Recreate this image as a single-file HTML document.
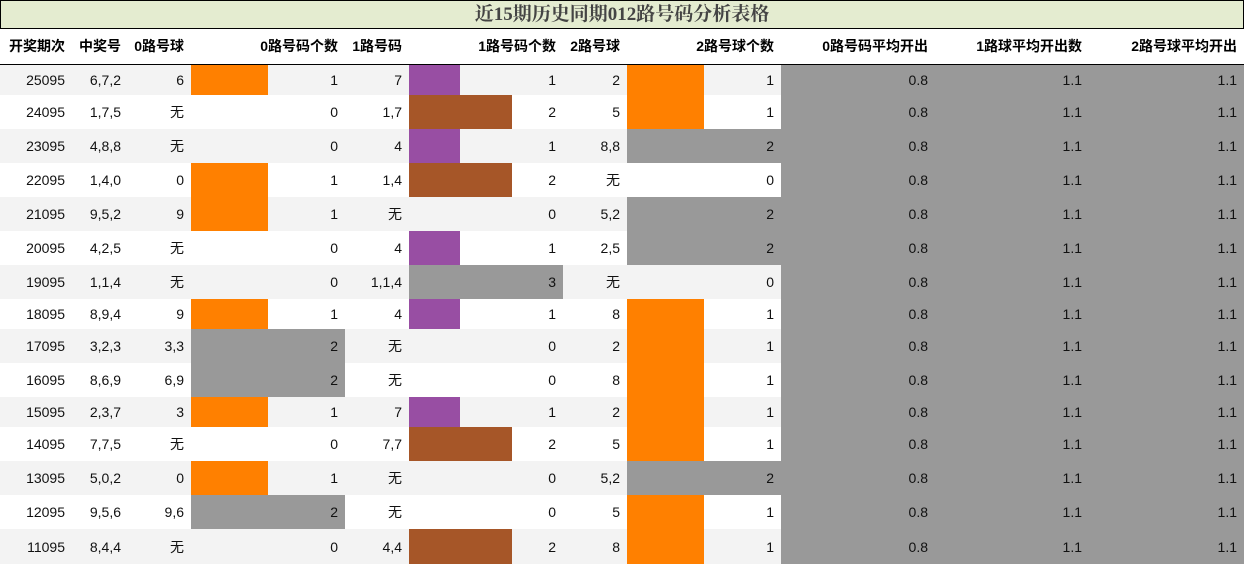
<!DOCTYPE html>
<html><head><meta charset="utf-8"><style>
*{margin:0;padding:0;box-sizing:border-box}
body{width:1244px;height:564px;overflow:hidden;background:#fff;font-family:"Liberation Sans","Noto Sans CJK SC",sans-serif;font-size:14px;color:#111}
.title{position:absolute;left:0;top:0;width:1244px;height:29px;background:#e4ecd0;border:1px solid #000;text-align:center;font:bold 19px/27px "Liberation Serif","Noto Serif CJK SC",serif;color:#444}
table{position:absolute;left:0;top:29px;border-collapse:collapse;table-layout:fixed;width:1244px}
td,th{text-align:right;padding:0 7px 0 0;white-space:nowrap;overflow:hidden}
th{height:35px;font-weight:bold;border-bottom:1px solid #000;color:#000}
tr:nth-child(even) td{background-color:#f3f3f3}
td.g,tr:nth-child(even) td.g{background:#999}
.o1{background-image:linear-gradient(90deg,#ff8000 77px,transparent 77px)!important}
.o2{background:#999!important}
.p1{background-image:linear-gradient(90deg,#984ea3 51px,transparent 51px)!important}
.b2{background-image:linear-gradient(90deg,#a65628 103px,transparent 103px)!important}
.g3{background:#999!important}
</style></head><body>
<div class="title">近15期历史同期012路号码分析表格</div>
<table>
<colgroup><col style="width:72px"><col style="width:56px"><col style="width:63px"><col style="width:154px"><col style="width:64px"><col style="width:154px"><col style="width:64px"><col style="width:154px"><col style="width:154px"><col style="width:154px"><col style="width:155px"></colgroup>
<tr><th>开奖期次</th><th>中奖号</th><th>0路号球</th><th>0路号码个数</th><th>1路号码</th><th>1路号码个数</th><th>2路号球</th><th>2路号球个数</th><th>0路号码平均开出</th><th>1路球平均开出数</th><th>2路号球平均开出</th></tr>
<tr style="height:31px"><td>25095</td><td>6,7,2</td><td>6</td><td class="o1">1</td><td>7</td><td class="p1">1</td><td>2</td><td class="o1">1</td><td class="g">0.8</td><td class="g">1.1</td><td class="g">1.1</td></tr>
<tr style="height:34px"><td>24095</td><td>1,7,5</td><td>无</td><td>0</td><td>1,7</td><td class="b2">2</td><td>5</td><td class="o1">1</td><td class="g">0.8</td><td class="g">1.1</td><td class="g">1.1</td></tr>
<tr style="height:34px"><td>23095</td><td>4,8,8</td><td>无</td><td>0</td><td>4</td><td class="p1">1</td><td>8,8</td><td class="o2">2</td><td class="g">0.8</td><td class="g">1.1</td><td class="g">1.1</td></tr>
<tr style="height:34px"><td>22095</td><td>1,4,0</td><td>0</td><td class="o1">1</td><td>1,4</td><td class="b2">2</td><td>无</td><td>0</td><td class="g">0.8</td><td class="g">1.1</td><td class="g">1.1</td></tr>
<tr style="height:34px"><td>21095</td><td>9,5,2</td><td>9</td><td class="o1">1</td><td>无</td><td>0</td><td>5,2</td><td class="o2">2</td><td class="g">0.8</td><td class="g">1.1</td><td class="g">1.1</td></tr>
<tr style="height:34px"><td>20095</td><td>4,2,5</td><td>无</td><td>0</td><td>4</td><td class="p1">1</td><td>2,5</td><td class="o2">2</td><td class="g">0.8</td><td class="g">1.1</td><td class="g">1.1</td></tr>
<tr style="height:34px"><td>19095</td><td>1,1,4</td><td>无</td><td>0</td><td>1,1,4</td><td class="g3">3</td><td>无</td><td>0</td><td class="g">0.8</td><td class="g">1.1</td><td class="g">1.1</td></tr>
<tr style="height:30px"><td>18095</td><td>8,9,4</td><td>9</td><td class="o1">1</td><td>4</td><td class="p1">1</td><td>8</td><td class="o1">1</td><td class="g">0.8</td><td class="g">1.1</td><td class="g">1.1</td></tr>
<tr style="height:34px"><td>17095</td><td>3,2,3</td><td>3,3</td><td class="o2">2</td><td>无</td><td>0</td><td>2</td><td class="o1">1</td><td class="g">0.8</td><td class="g">1.1</td><td class="g">1.1</td></tr>
<tr style="height:34px"><td>16095</td><td>8,6,9</td><td>6,9</td><td class="o2">2</td><td>无</td><td>0</td><td>8</td><td class="o1">1</td><td class="g">0.8</td><td class="g">1.1</td><td class="g">1.1</td></tr>
<tr style="height:30px"><td>15095</td><td>2,3,7</td><td>3</td><td class="o1">1</td><td>7</td><td class="p1">1</td><td>2</td><td class="o1">1</td><td class="g">0.8</td><td class="g">1.1</td><td class="g">1.1</td></tr>
<tr style="height:34px"><td>14095</td><td>7,7,5</td><td>无</td><td>0</td><td>7,7</td><td class="b2">2</td><td>5</td><td class="o1">1</td><td class="g">0.8</td><td class="g">1.1</td><td class="g">1.1</td></tr>
<tr style="height:34px"><td>13095</td><td>5,0,2</td><td>0</td><td class="o1">1</td><td>无</td><td>0</td><td>5,2</td><td class="o2">2</td><td class="g">0.8</td><td class="g">1.1</td><td class="g">1.1</td></tr>
<tr style="height:34px"><td>12095</td><td>9,5,6</td><td>9,6</td><td class="o2">2</td><td>无</td><td>0</td><td>5</td><td class="o1">1</td><td class="g">0.8</td><td class="g">1.1</td><td class="g">1.1</td></tr>
<tr style="height:35px"><td>11095</td><td>8,4,4</td><td>无</td><td>0</td><td>4,4</td><td class="b2">2</td><td>8</td><td class="o1">1</td><td class="g">0.8</td><td class="g">1.1</td><td class="g">1.1</td></tr>
</table>
</body></html>
